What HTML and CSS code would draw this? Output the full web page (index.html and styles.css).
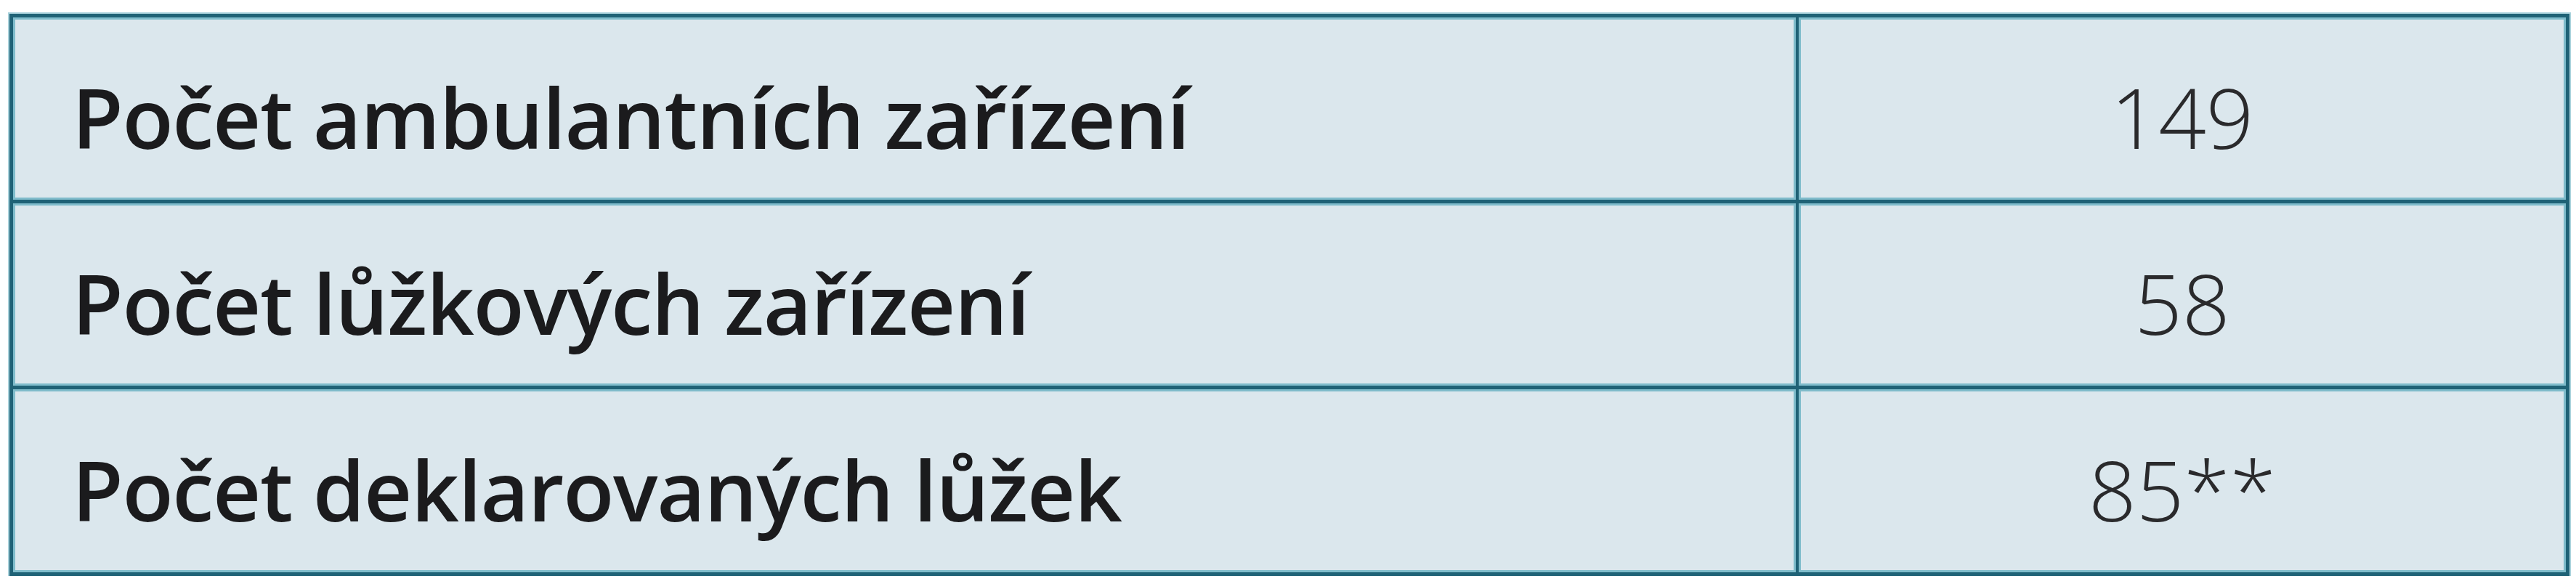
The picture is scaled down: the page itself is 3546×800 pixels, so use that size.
FILE: index.html
```html
<!DOCTYPE html>
<html lang="cs">
<head>
<meta charset="utf-8">
<title>Tabulka</title>
<link rel="stylesheet" href="styles.css">
</head>
<body>
<div class="table">
  <div class="cell label">Počet ambulantních zařízení</div>
  <div class="cell value">149</div>
  <div class="cell label">Počet lůžkových zařízení</div>
  <div class="cell value">58</div>
  <div class="cell label">Počet deklarovaných lůžek</div>
  <div class="cell value">85**</div>
</div>
</body>
</html>
```
FILE: styles.css
```css
html, body {
  margin: 0;
  padding: 0;
  background: #ffffff;
}

body {
  padding: 19px 0 0 13px;
  font-family: "Open Sans", "Noto Sans", sans-serif;
}

.table {
  display: grid;
  grid-template-columns: 2454px 1056px;
  grid-template-rows: 251px 251px 252px;
  gap: 5px 4px;
  padding: 5px;
  width: 3524px;
  box-sizing: border-box;
  background: #1f6276;
  box-shadow: 0 0 0 2px #a9d2dc;
}

.cell {
  box-sizing: border-box;
  background: #dbe7ed;
  border: 3px solid #7fbccb;
  display: flex;
  align-items: center;
  padding-top: 22px;
  font-size: 115px;
  line-height: 1;
  white-space: nowrap;
}

.label {
  padding-left: 78px;
  font-weight: 600;
  letter-spacing: -1.3px;
  color: #1b1b1d;
}

.value {
  justify-content: center;
  font-weight: 300;
  color: #2a2a2c;
}
```
